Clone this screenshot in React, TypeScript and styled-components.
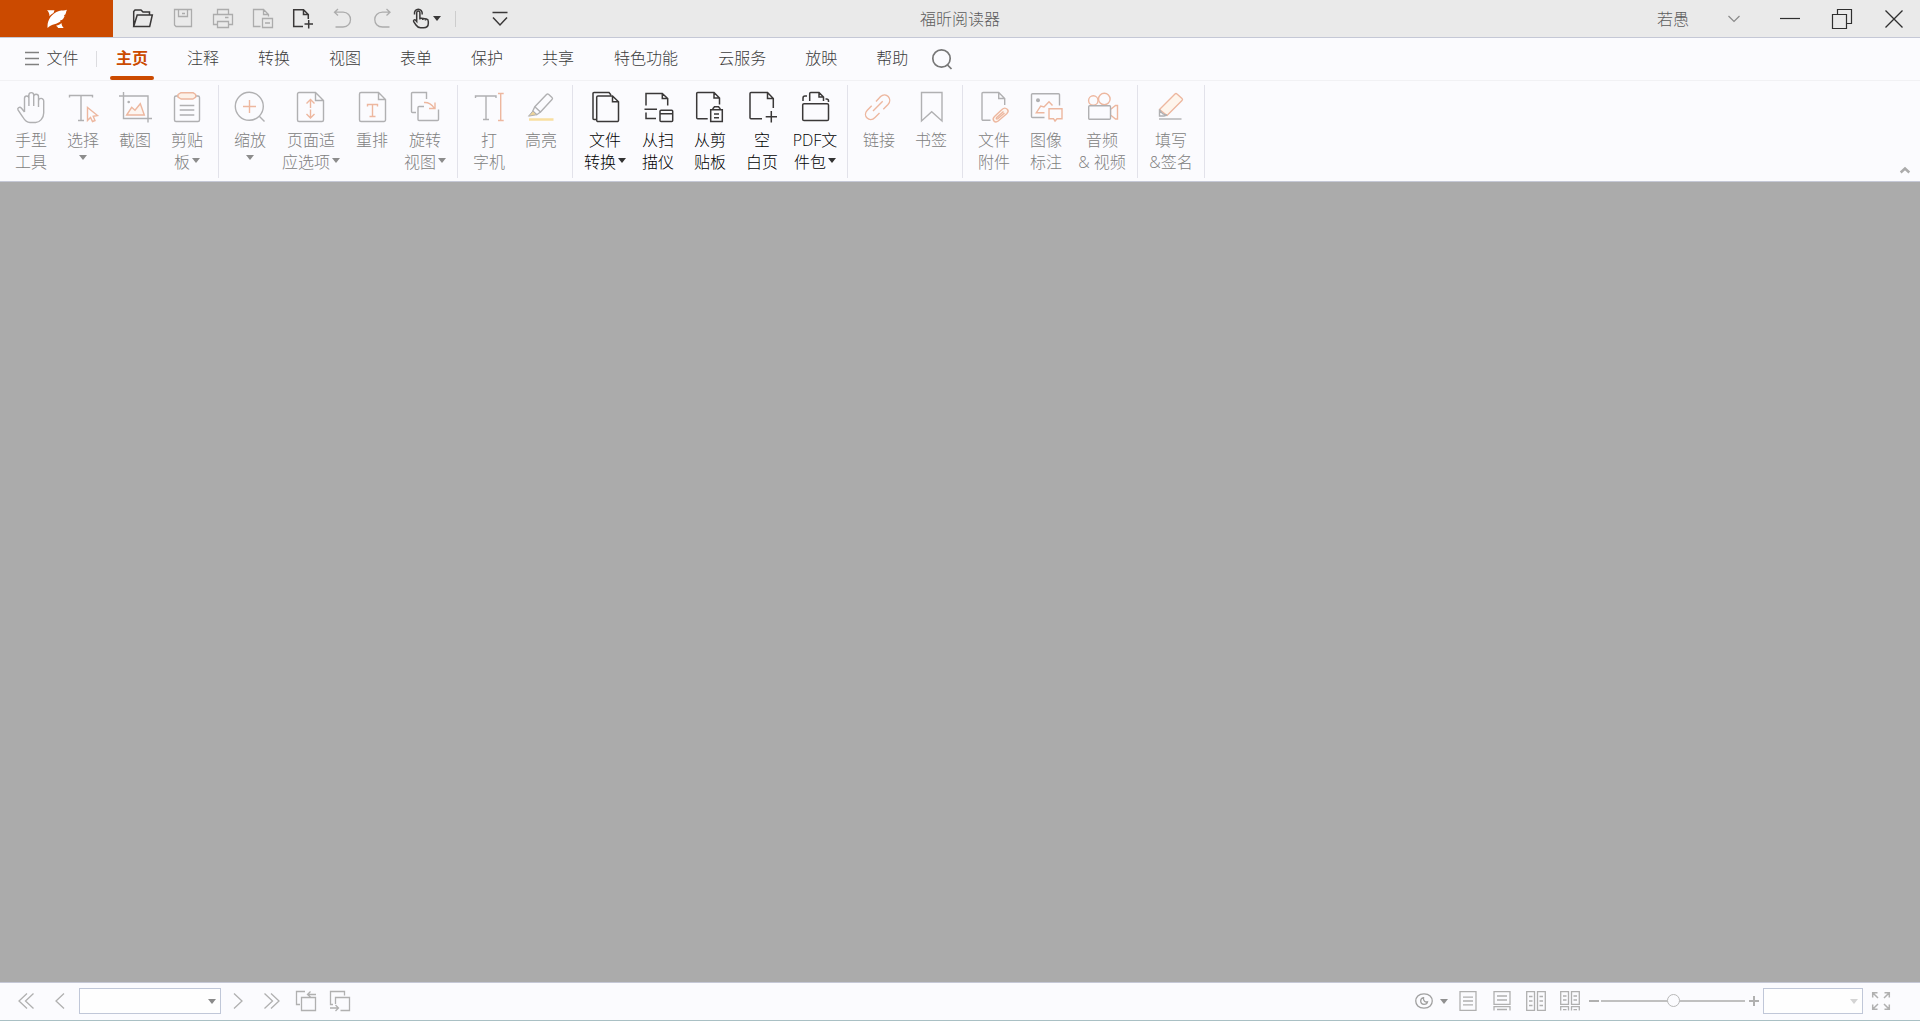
import React from "react";
import styled, { createGlobalStyle } from "styled-components";

const GREY = "#b0b0b2";
const ORANGE = "#edb79f";
const INK = "#3a3838";
const BRAND = "#cb4a00";

const GlobalStyle = createGlobalStyle`
  *, *::before, *::after { box-sizing: border-box; }
  body {
    margin: 0;
    background: #ababab;
    color: #3c3c3c;
    font-family: "Open Sans", "Noto Sans CJK SC", sans-serif;
    font-size: 16px;
    font-weight: 300;
    line-height: 22px;
  }
  button, input, select { font: inherit; color: inherit; }
`;

const Window = styled.div`
  min-height: 100vh;
  display: flex;
  flex-direction: column;
`;

const PlainButton = styled.button`
  padding: 0;
  border: 0;
  background: none;
  display: flex;
  align-items: center;
  justify-content: center;
`;

/* ---------- title bar ---------- */

const TitleBar = styled.header`
  display: grid;
  grid-template-columns: 1fr auto 1fr;
  height: 38px;
  background: #eaeaea;
  border-bottom: 1px solid #c5c8d6;
`;

const QuickAccess = styled.div`
  display: flex;
  align-items: center;
`;

const Logo = styled.div`
  width: 113px;
  height: 37px;
  margin-right: 10px;
  background: ${BRAND};
  display: flex;
  align-items: center;
  justify-content: center;
`;

const QuickButton = styled(PlainButton)`
  width: 40px;
  height: 36px;
  color: ${(p) => (p.disabled ? "#acacac" : INK)};
`;

const HandButton = styled(QuickButton)`
  width: 46px;
  gap: 2px;
`;

const QuickDivider = styled.span`
  width: 1px;
  height: 16px;
  margin: 0 24px 0 6px;
  background: #cdcdcd;
`;

const AppTitle = styled.h1`
  margin: 0;
  align-self: center;
  font-size: 16px;
  font-weight: inherit;
  color: #5c5c5c;
`;

const WindowControls = styled.div`
  display: flex;
  align-items: center;
  justify-content: flex-end;
`;

const UserName = styled(PlainButton)`
  height: 36px;
  color: #5c5c5c;
`;

const AccountToggle = styled(PlainButton)`
  width: 28px;
  height: 36px;
  margin: 0 16px 0 31px;
  color: #8a8a8a;
`;

const WindowButton = styled(PlainButton)`
  width: 52px;
  height: 36px;
  color: #2f2f2f;
`;

/* ---------- tab strip ---------- */

const TabStrip = styled.nav`
  display: flex;
  align-items: center;
  height: 43px;
  background: #fbfbfe;
  border-bottom: 1px solid #f1f1f4;
`;

const FileButton = styled(PlainButton)`
  width: 96px;
  height: 42px;
  gap: 7px;
  padding: 0 0 2px 8px;
`;

const TabDivider = styled.span`
  width: 1px;
  height: 16px;
  background: #dcdce0;
`;

const Tab = styled.button<{ $active?: boolean; $wide?: boolean }>`
  height: 42px;
  padding: 0 20px 2px ${(p) => (p.$wide ? 20 : 19)}px;
  border: 0;
  background: none;
  position: relative;
  color: ${(p) => (p.$active ? BRAND : "inherit")};
  font-weight: ${(p) => (p.$active ? 700 : "inherit")};

  &::after {
    content: "";
    display: ${(p) => (p.$active ? "block" : "none")};
    position: absolute;
    left: 13px;
    right: 14px;
    bottom: 0;
    height: 4px;
    border-radius: 2px;
    background: ${BRAND};
  }
`;

const SearchButton = styled(PlainButton)`
  width: 28px;
  height: 42px;
  color: #777;
`;

/* ---------- ribbon ---------- */

const Ribbon = styled.section`
  display: flex;
  align-items: flex-start;
  height: 101px;
  padding-top: 4px;
  background: #fbfbfe;
  border-bottom: 1px solid #c5c8d6;
`;

const Group = styled.div`
  display: flex;
  height: 93px;
  padding: 0 5px;
  border-right: 1px solid #e2e2ea;
`;

const Tool = styled.button<{ $width?: number }>`
  width: ${(p) => p.$width ?? 52}px;
  padding: 6px 0 0;
  border: 0;
  background: none;
  display: flex;
  flex-direction: column;
  align-items: center;
  justify-content: flex-start;
  white-space: nowrap;
  color: ${(p) => (p.disabled ? "#808080" : "#000")};
`;

const ToolLabel = styled.span`
  margin-top: 6px;
`;

const ToolLine = styled.span`
  display: flex;
  align-items: center;
  justify-content: center;
  gap: 2px;
  height: 22px;

  svg {
    margin-bottom: 3px;
  }
`;

const CaretLine = styled(ToolLine)`
  height: 16px;
`;

const Collapse = styled(PlainButton)`
  align-self: flex-end;
  width: 30px;
  height: 22px;
  margin-left: auto;
  color: #ababab;
`;

const Workspace = styled.main`
  flex: 1;
  background: #ababab;
`;

/* ---------- status bar ---------- */

const StatusBar = styled.footer`
  display: flex;
  align-items: center;
  justify-content: space-between;
  height: 39px;
  padding: 0 21px 1px 9px;
  background: #fbfbfe;
  border-top: 1px solid #c5c8d6;
  border-bottom: 1px solid #a9c0c4;
  color: #b0b0b0;
`;

const StatusGroup = styled.div`
  display: flex;
  align-items: center;
`;

const StatusButton = styled(PlainButton)<{ $width?: number }>`
  width: ${(p) => p.$width ?? 34}px;
  height: 28px;
  gap: 7px;
`;

const ComboBox = styled.div<{ $width: number }>`
  position: relative;
  width: ${(p) => p.$width}px;
  height: 26px;
`;

const PageBox = styled(ComboBox)`
  margin-left: 2px;
`;

const ComboSelect = styled.select`
  appearance: none;
  width: 100%;
  height: 100%;
  padding: 0 20px 0 6px;
  border: 1px solid #c0c7d8;
  border-radius: 0;
  background: #fefefe;
  opacity: 1;
`;

const ComboCaret = styled.span`
  position: absolute;
  right: 5px;
  top: 11px;
  display: flex;
  pointer-events: none;
`;

const ZoomSlider = styled.input`
  appearance: none;
  width: 144px;
  height: 14px;
  margin: 0;
  background: none;

  &::-webkit-slider-runnable-track {
    height: 2px;
    background: #c0c0c0;
  }
  &::-webkit-slider-thumb {
    appearance: none;
    width: 13px;
    height: 13px;
    margin-top: -6px;
    border: 1px solid #b8b8b8;
    border-radius: 50%;
    background: #fbfbfe;
  }
`;

/* ---------- drawings ---------- */

type IconProps = {
  size?: number;
  width?: number;
  stroke?: number;
  children: React.ReactNode;
};

const Icon = ({ size = 20, width = size, stroke = 1.3, children }: IconProps) => (
  <svg
    width={width}
    height={size}
    viewBox={`0 0 ${width} ${size}`}
    fill="none"
    stroke="currentColor"
    strokeWidth={stroke}
    overflow="visible"
    aria-hidden="true"
  >
    {children}
  </svg>
);

const Caret = ({ color }: { color: string }) => (
  <svg width="8" height="5" viewBox="0 0 8 5" aria-hidden="true">
    <path d="M0 0H8L4 5Z" fill={color} />
  </svg>
);

const art: Record<string, React.ReactNode> = {
  hand: (
    <path d="M9.5 21V7.2a2.2 2.2 0 0 1 4.4 0V15M13.9 7V4a2.4 2.4 0 0 1 4.8 0V15M18.7 5.6a2.4 2.4 0 0 1 4.8 0V16M23.5 10a2.6 2.6 0 0 1 5.2 0V22c0 5-4 9.5-8 9.5h-5.7c-3.6 0-5.5-2.5-7.2-5.5L3 19c-1-2.2 1.8-3.6 3.5-1.8L9.5 21" />
  ),
  select: (
    <>
      <path d="M2.5 6.5V4.5H25.5V6.5M14 4.5V29.5M11 29.5H17" />
      <path stroke={ORANGE} d="M20.5 16.5V29.5L23.5 26.5L25.5 30.5L28 29.5L26.2 25.3L30.5 24.5Z" />
    </>
  ),
  snapshot: (
    <>
      <path d="M4.5 1V27.5H33M0 5H29V31.5" />
      <circle cx="9.7" cy="11" r="1.3" fill="currentColor" stroke="none" />
      <path stroke={ORANGE} fill="#fdf5f0" d="M7.7 24L12.7 16.3L16 19.3L21.3 12.7L25.3 24Z" />
    </>
  ),
  clipboard: (
    <>
      <rect x="3.5" y="5" width="25" height="25.5" rx="1.5" />
      <path d="M8.7 14.5H23.3M8.7 19H23.3M8.7 24H23.3" />
      <path stroke={ORANGE} fill="#fdf1e8" d="M10 1.7H22L24.7 3.5V6.2L22 8H10L7 6.2V3.5Z" strokeLinejoin="round" />
    </>
  ),
  zoom: (
    <>
      <circle cx="15.3" cy="15.3" r="14" />
      <path d="M25.3 25.3L30.5 30.5" />
      <path stroke={ORANGE} d="M9 15.5H22M15.5 9V22" />
    </>
  ),
  fit: (
    <>
      <path d="M20.5 1.5H4a1.5 1.5 0 0 0-1.5 1.5V29a1.5 1.5 0 0 0 1.5 1.5H27a1.5 1.5 0 0 0 1.5-1.5V9.5ZM20.5 1.5V9.5H28.5" />
      <path stroke={ORANGE} d="M15.5 9V17M15.5 18.5V26.5M11.5 12.5L15.5 8.5L19.5 12.5M11.5 23L15.5 27L19.5 23" />
    </>
  ),
  reflow: (
    <>
      <path d="M22.5 1.5H5a1.5 1.5 0 0 0-1.5 1.5V29a1.5 1.5 0 0 0 1.5 1.5H28a1.5 1.5 0 0 0 1.5-1.5V8.5ZM22.5 1.5V8.5H29.5" />
      <path stroke={ORANGE} d="M11.5 15.5V13.5H21.5V15.5M16.5 13.5V25.5M13.5 25.5H19.5" />
    </>
  ),
  rotate: (
    <>
      <path d="M17.5 8V1.5H3.5a1 1 0 0 0-1 1V20.5a1 1 0 0 0 1 1H7M15 15.5H10a1 1 0 0 0-1 1V28.5a1 1 0 0 0 1 1H28.5a1 1 0 0 0 1-1V18.5" />
      <path stroke={ORANGE} d="M15 11.5C19 11 23.5 13.5 25.5 17.5M26 11.5V17.5H20" />
    </>
  ),
  typewriter: (
    <>
      <path d="M2.5 7V5H23V7M13 5V28.5M10 28.5H16" />
      <path stroke={ORANGE} d="M27.7 2.5V29.5M25 2.5H30.7M25 29.5H30.7" />
    </>
  ),
  highlight: (
    <>
      <path d="M21.5 3.5Q22.5 2.5 23.5 3.3L27 6.5Q28 7.5 27 8.5L15.5 21L9.8 15.8ZM9.8 15.8L7.8 20L11.8 23.7L15.5 21" />
      <path fill="#edd49b" d="M7.8 20L3.5 25.2L11.8 23.7Z" strokeWidth="1" />
      <path stroke="#f9dfa0" strokeWidth="2.5" d="M4 28.5H28.5" />
    </>
  ),
  convert: (
    <path d="M22 4L20 1.5H5a1 1 0 0 0-1 1V27.5a1 1 0 0 0 1 1H7M23.5 5H9a1.3 1.3 0 0 0-1.3 1.3V29.2a1.3 1.3 0 0 0 1.3 1.3H28.2a1.3 1.3 0 0 0 1.3-1.3V10.7ZM23.5 5V10.7H29.5" />
  ),
  scanner: (
    <path d="M4 14.5V2.5H20.3L25.7 7.5V14.5M20.3 2.5V7.5H25.7M2.5 18.3H15M4 21.5V27.5H14M18 20.3a1 1 0 0 1 1-1H29.7a1 1 0 0 1 1 1V29.5a1 1 0 0 1-1 1H19a1 1 0 0 1-1-1ZM18 22.7H30.7" />
  ),
  paste: (
    <path d="M13.7 27.7H3.7a1 1 0 0 1-1-1V2.5a1 1 0 0 1 1-1H20L25.5 7V13.5M20 1.5V7H25.5M19 18.7H16.7V30.5H28.3V18.7H26M19 18.7V17.5L20.5 15.7H24.5L26 17.5V18.7ZM20 23H25M20 26.7H25" />
  ),
  blank: (
    <path d="M16 27.7H5a1 1 0 0 1-1-1V2.5a1 1 0 0 1 1-1H21.5L27.3 7.5V17M21.5 1.5V7.5H27.3M19.7 25.7H31M25.3 20V31.5" />
  ),
  portfolio: (
    <path d="M5 12.7H28.2a1.3 1.3 0 0 1 1.3 1.3V28.2a1.3 1.3 0 0 1-1.3 1.3H5a1.3 1.3 0 0 1-1.3-1.3V14a1.3 1.3 0 0 1 1.3-1.3ZM4 10V7Q4 5 6 5H8M26.5 8H27.5Q29.5 8 29.5 10V11M10.7 10V2.5a1 1 0 0 1 1-1H20L24.5 6V10M20 1.5V6H24.5" />
  ),
  link: (
    <path stroke={ORANGE} d="M13 10.5L17.6 5.5C23 .5 30 8 25 13.5L20.3 18.3M8.7 14.7L4.3 19.2C-1 25 6.5 32 12 26.5L16.5 22M10 20L19.7 10.3" />
  ),
  bookmark: <path d="M6.5 1.5H27V30L16.7 20.7L6.5 30Z" />,
  attach: (
    <>
      <path d="M12.5 29.3H5a1 1 0 0 1-1-1V2.5a1 1 0 0 1 1-1H20.7L26.7 7.5V14M20.7 1.5V7.5H26.7" />
      <path stroke={ORANGE} fill="#fdf5f0" d="M29.5 18.5C27.5 16.5 25.5 17 24 18.5L16.5 25.5C13.2 28.8 17 32.5 20.2 30L28.7 22.7C30.5 21 30.5 19.7 29.5 18.5ZM25.5 20.5L18.7 26.5C17.7 27.7 18.7 28.5 19.7 27.8L26.5 22" />
    </>
  ),
  image: (
    <>
      <path d="M29.5 14.5V3.7a1 1 0 0 0-1-1H2.5a1 1 0 0 0-1 1V25.5a1 1 0 0 0 1 1H14.5" />
      <circle cx="8" cy="9.3" r="2" fill="currentColor" stroke="none" />
      <path stroke={ORANGE} d="M14.5 21.7H6.3L10.7 15L14 16L19 10.7L22.5 14.5M19 17.7H32V27.7H27L25 30L23.5 27.7H19Z" />
    </>
  ),
  video: (
    <>
      <g stroke={ORANGE}>
        <circle cx="7.3" cy="9.5" r="4.7" />
        <circle cx="18.3" cy="8" r="5.8" />
        <path d="M24.5 18.5L29.5 14.5H31.5V28H29.5L24.5 24Z" />
      </g>
      <rect x="2.7" y="14.7" width="21.8" height="13.5" rx="1" fill="#fbfbfe" />
    </>
  ),
  sign: (
    <>
      <path stroke={ORANGE} fill="#fef5ec" strokeLinejoin="round" d="M4.5 18.5L20 3Q21 2 22 3L27 7.5Q28 8.5 27 9.5L12 24.5Z" />
      <path fill="#fbfbfe" d="M4.5 18.5V25H9L12 24Q7 24 4.5 18.5Z" />
      <path d="M4 28H26.5" />
    </>
  ),
};

/* ---------- content ---------- */

type ToolSpec = {
  icon: string;
  lines: string[];
  enabled?: boolean;
  caret?: "inline" | "below";
  width?: number;
};

const groups: ToolSpec[][] = [
  [
    { icon: "hand", lines: ["手型", "工具"] },
    { icon: "select", lines: ["选择"], caret: "below" },
    { icon: "snapshot", lines: ["截图"] },
    { icon: "clipboard", lines: ["剪贴", "板"], caret: "inline" },
  ],
  [
    { icon: "zoom", lines: ["缩放"], caret: "below" },
    { icon: "fit", lines: ["页面适", "应选项"], caret: "inline", width: 70 },
    { icon: "reflow", lines: ["重排"] },
    { icon: "rotate", lines: ["旋转", "视图"], caret: "inline", width: 54 },
  ],
  [
    { icon: "typewriter", lines: ["打", "字机"] },
    { icon: "highlight", lines: ["高亮"] },
  ],
  [
    { icon: "convert", lines: ["文件", "转换"], caret: "inline", width: 54, enabled: true },
    { icon: "scanner", lines: ["从扫", "描仪"], enabled: true },
    { icon: "paste", lines: ["从剪", "贴板"], enabled: true },
    { icon: "blank", lines: ["空", "白页"], enabled: true },
    { icon: "portfolio", lines: ["PDF文", "件包"], caret: "inline", width: 54, enabled: true },
  ],
  [
    { icon: "link", lines: ["链接"] },
    { icon: "bookmark", lines: ["书签"] },
  ],
  [
    { icon: "attach", lines: ["文件", "附件"] },
    { icon: "image", lines: ["图像", "标注"] },
    { icon: "video", lines: ["音频", "& 视频"], width: 60 },
  ],
  [{ icon: "sign", lines: ["填写", "&签名"], width: 56 }],
];

const tabs = ["主页", "注释", "转换", "视图", "表单", "保护", "共享", "特色功能", "云服务", "放映", "帮助"];

const IconTint = styled.span<{ $enabled?: boolean }>`
  display: flex;
  color: ${(p) => (p.$enabled ? INK : GREY)};
`;

function RibbonTool({ icon, lines, enabled, caret, width }: ToolSpec) {
  const caretColor = enabled ? "#333" : "#8c8c8c";
  return (
    <Tool $width={width} disabled={!enabled}>
      <IconTint $enabled={enabled}>
        <Icon size={32} stroke={enabled ? 1.5 : 1.4}>{art[icon]}</Icon>
      </IconTint>
      <ToolLabel>
        {lines.map((line, i) => (
          <ToolLine key={line}>
            {line}
            {caret === "inline" && i === lines.length - 1 && <Caret color={caretColor} />}
          </ToolLine>
        ))}
        {caret === "below" && (
          <CaretLine>
            <Caret color={caretColor} />
          </CaretLine>
        )}
      </ToolLabel>
    </Tool>
  );
}

export default function App() {
  return (
    <>
      <GlobalStyle />
      <Window>
        <TitleBar>
          <QuickAccess>
            <Logo>
              <svg width="20" height="20" viewBox="0 0 20 20" fill="#fff" aria-hidden="true">
                <path d="M.6 19C-.2 12 4 4.500 12 2C15 1 17.500 2 20 .8C18.800 2.500 19.500 3.500 18.300 5.500L16.900 6.200L17.600 7C16.900 9 16 10.200 15 11L13.200 11.200L13.600 12.200C10 15.500 5 14.500 .6 19Z" />
                <path d="M0 1.200H7.500L6.500 4C4.700 5 3.500 6 2.500 7.200C2.500 4.500 1.500 2.500 0 1.200Z" />
                <path d="M9 16.700C11.500 16.200 13 15.400 14.400 14C14.600 16 15.600 18 16.700 19H11.200C10.800 18 10 17.200 9 16.700Z" />
              </svg>
            </Logo>
            <QuickButton aria-label="打开">
              <Icon stroke={1.5}>
                <path d="M.7 17.5V2.5L2 1H8L10 3H16.5V6M.7 17.5L4.2 6H19.3L16.7 17.5Z" />
              </Icon>
            </QuickButton>
            <QuickButton aria-label="保存" disabled>
              <Icon>
                <path d="M1.5 .5H18.5V17.5H3L1.5 16ZM5.5 .5V7.5H14.5V.5M9 4.500H12" />
              </Icon>
            </QuickButton>
            <QuickButton aria-label="打印" disabled>
              <Icon>
                <path d="M4.5 5V.5H15.5V5M4.5 15.5H.5V5.5H19.5V15.5H15.5M4.5 12.5H15.5V18.5H4.5ZM12 8.5H15.5" />
              </Icon>
            </QuickButton>
            <QuickButton aria-label="发送文档" disabled>
              <Icon>
                <path d="M7.5 17.5H.5V.5H10.5L15.5 5.5V7.5M10.5 .5V5.5H15.5M9.5 9.5H19.5V18.5H9.5ZM12 14H17" />
              </Icon>
            </QuickButton>
            <QuickButton aria-label="新建">
              <Icon stroke={1.5}>
                <path d="M10 17.5H.7V.7H10.5L15.3 5.5V10M10.5 .7V5.5H15.3M11.5 15H20M15.7 11V19.5" />
              </Icon>
            </QuickButton>
            <QuickButton aria-label="撤销" disabled>
              <Icon>
                <path d="M5 0L1.5 3.2L5 6.5M1.5 3.2H10C20 3.2 20 18 10 18H2.5" />
              </Icon>
            </QuickButton>
            <QuickButton aria-label="重做" disabled>
              <Icon>
                <path d="M13.5 0L17 3.2L13.5 6.5M17 3.2H9.5C-.8 3.2 -.8 18 9.5 18H16.5" />
              </Icon>
            </QuickButton>
            <HandButton aria-label="手型工具">
              <Icon stroke={1.5}>
                <path d="M5.7 12.5V3.7a1.6 1.6 0 0 1 3.2 0V9L15.5 10Q17.3 10.4 17.3 12.5V14.5C17.3 17.5 15 18.7 12.5 18.7H9.5C7 18.7 6 17.5 5 16L2.7 12.7C2 11.3 3.5 10 4.7 11.3ZM8.9 9V10.5M11.7 9.5V11M14.5 10V11.5M3.5 5.5C2.5-1.5 12-1.5 11.2 5.5" />
              </Icon>
              <Caret color={INK} />
            </HandButton>
            <QuickDivider />
            <QuickButton aria-label="自定义快速访问工具栏">
              <Icon width={16} size={16} stroke={1.5}>
                <path d="M.5 1.5H15.5M1 6.5L8 14L15 6.5" />
              </Icon>
            </QuickButton>
          </QuickAccess>
          <AppTitle>福昕阅读器</AppTitle>
          <WindowControls>
            <UserName>若愚</UserName>
            <AccountToggle aria-label="账户菜单">
              <Icon width={12} size={8} stroke={1.2}>
                <path d="M.5 1L6 6.5L11.5 1" />
              </Icon>
            </AccountToggle>
            <WindowButton aria-label="最小化">
              <Icon stroke={1.2}>
                <path d="M0 9.5H20" />
              </Icon>
            </WindowButton>
            <WindowButton aria-label="还原">
              <Icon stroke={1.2}>
                <path d="M.5 5.5H14.5V19.5H.5ZM5.5 5.5V.5H19.5V14.5H14.5" />
              </Icon>
            </WindowButton>
            <WindowButton aria-label="关闭">
              <Icon width={18} size={18} stroke={1.3}>
                <path d="M.5 .5L17.5 17.5M17.5 .5L.5 17.5" />
              </Icon>
            </WindowButton>
          </WindowControls>
        </TitleBar>

        <TabStrip>
          <FileButton>
            <Icon width={14} size={14} stroke={1.3}>
              <path d="M0 1.5H14M0 7.5H14M0 13.5H14" stroke="#808080" />
            </Icon>
            文件
          </FileButton>
          <TabDivider />
          {tabs.map((name, i) => (
            <Tab key={name} $active={i === 0} $wide={name.length > 2}>
              {name}
            </Tab>
          ))}
          <SearchButton aria-label="搜索">
            <Icon stroke={1.7}>
              <circle cx="9.5" cy="9.5" r="8.7" />
              <path d="M15.5 16L19.5 20" />
            </Icon>
          </SearchButton>
        </TabStrip>

        <Ribbon>
          {groups.map((tools, i) => (
            <Group key={i}>
              {tools.map((tool) => (
                <RibbonTool key={tool.icon} {...tool} />
              ))}
            </Group>
          ))}
          <Collapse aria-label="折叠功能区">
            <Icon width={10} size={6} stroke={2.5}>
              <path d="M.7 5.5L5 1.5L9.3 5.5" />
            </Icon>
          </Collapse>
        </Ribbon>

        <Workspace />

        <StatusBar>
          <StatusGroup>
            <StatusButton aria-label="首页" disabled>
              <Icon width={16} size={16}>
                <path d="M9 .5L1 8L9 15.5M15.5 .5L7.5 8L15.5 15.5" />
              </Icon>
            </StatusButton>
            <StatusButton aria-label="上一页" disabled>
              <Icon width={10} size={16}>
                <path d="M9 .5L1 8L9 15.5" />
              </Icon>
            </StatusButton>
            <PageBox $width={142}>
              <ComboSelect aria-label="页码" disabled />
              <ComboCaret>
                <Caret color="#8a8a8a" />
              </ComboCaret>
            </PageBox>
            <StatusButton aria-label="下一页" disabled>
              <Icon width={10} size={16}>
                <path d="M1 .5L9 8L1 15.5" />
              </Icon>
            </StatusButton>
            <StatusButton aria-label="末页" disabled>
              <Icon width={16} size={16}>
                <path d="M.5 .5L8.5 8L.5 15.5M7 .5L15 8L7 15.5" />
              </Icon>
            </StatusButton>
            <StatusButton aria-label="上一视图" disabled>
              <Icon>
                <path d="M9 .5H.5V13.5H4M5.5 6.5H19.5V19.5H5.5ZM20 3.5H12M14.5 .5L11.5 3.5L14.5 6" />
              </Icon>
            </StatusButton>
            <StatusButton aria-label="下一视图" disabled>
              <Icon>
                <path d="M14.5 4.5V.5H.5V13.5H3M5.5 13V6.5H19.5V19.5H10.5M0 17H8M5.5 14L8.5 17L5.5 20" />
              </Icon>
            </StatusButton>
          </StatusGroup>

          <StatusGroup>
            <StatusButton aria-label="阅读模式" $width={40} disabled>
              <Icon width={18} size={16}>
                <path stroke="#a0a0a0" d="M9 .8C20 .8 20 15.2 9 15.2C-2 15.2 -2 .8 9 .8Z" />
                <path stroke="#a0a0a0" d="M8.5 4.7C4.500 5.500 4.800 11.300 9 11.300C11 11.300 12.300 10.200 12.500 8.800C10.500 9.600 8 8 8.500 4.700Z" />
              </Icon>
              <Caret color="#909090" />
            </StatusButton>
            <StatusButton aria-label="单页" disabled>
              <Icon width={18}>
                <path d="M1 .7H17V19.3H1ZM4 6.2H14M4 10H14M4 13.8H14" />
              </Icon>
            </StatusButton>
            <StatusButton aria-label="连续" disabled>
              <Icon width={18}>
                <path d="M1 .7H17V13.3H1ZM4 5H14M4 9H14M1 19.5V15.7H17V19.5M4 18.5H14" />
              </Icon>
            </StatusButton>
            <StatusButton aria-label="双页" disabled>
              <Icon width={20}>
                <path d="M.7 .7H8.5V19.3H.7ZM11.5 .7H19.3V19.3H11.5ZM3 5.5H6.5M3 10H6.5M3 14.5H6.5M13.5 5.5H17M13.5 10H17M13.5 14.5H17" />
              </Icon>
            </StatusButton>
            <StatusButton aria-label="连续双页" disabled>
              <Icon width={20}>
                <path d="M.7 .7H8.5V13.3H.7ZM11.5 .7H19.3V13.3H11.5ZM3 5H6.5M3 9H6.5M13.5 5H17M13.5 9H17M.7 19.5V15.7H8.5V19.5M11.5 19.5V15.7H19.3V19.5M3 18.7H6.5M13.5 18.7H17" />
              </Icon>
            </StatusButton>
            <StatusButton aria-label="缩小" $width={14} disabled>
              <Icon width={10} size={10} stroke={2}>
                <path d="M0 5H10" />
              </Icon>
            </StatusButton>
            <ZoomSlider type="range" aria-label="缩放比例" min={0} max={100} defaultValue={50} disabled />
            <StatusButton aria-label="放大" $width={18} disabled>
              <Icon width={10} size={10} stroke={2}>
                <path d="M0 5H10M5 0V10" />
              </Icon>
            </StatusButton>
            <ComboBox $width={100}>
              <ComboSelect aria-label="缩放级别" disabled />
              <ComboCaret>
                <Caret color="#d4d4d4" />
              </ComboCaret>
            </ComboBox>
            <StatusButton aria-label="全屏" $width={36} disabled>
              <Icon width={18} size={18} stroke={1.5}>
                <path d="M.7 5.5V.7H5.5M.7 .7L6 6M12.5 .7H17.3V5.5M17.3 .7L12 6M.7 12.5V17.3H5.5M.7 17.3L6 12M12.5 17.3H17.3V12.5M17.3 17.3L12 12" />
              </Icon>
            </StatusButton>
          </StatusGroup>
        </StatusBar>
      </Window>
    </>
  );
}
